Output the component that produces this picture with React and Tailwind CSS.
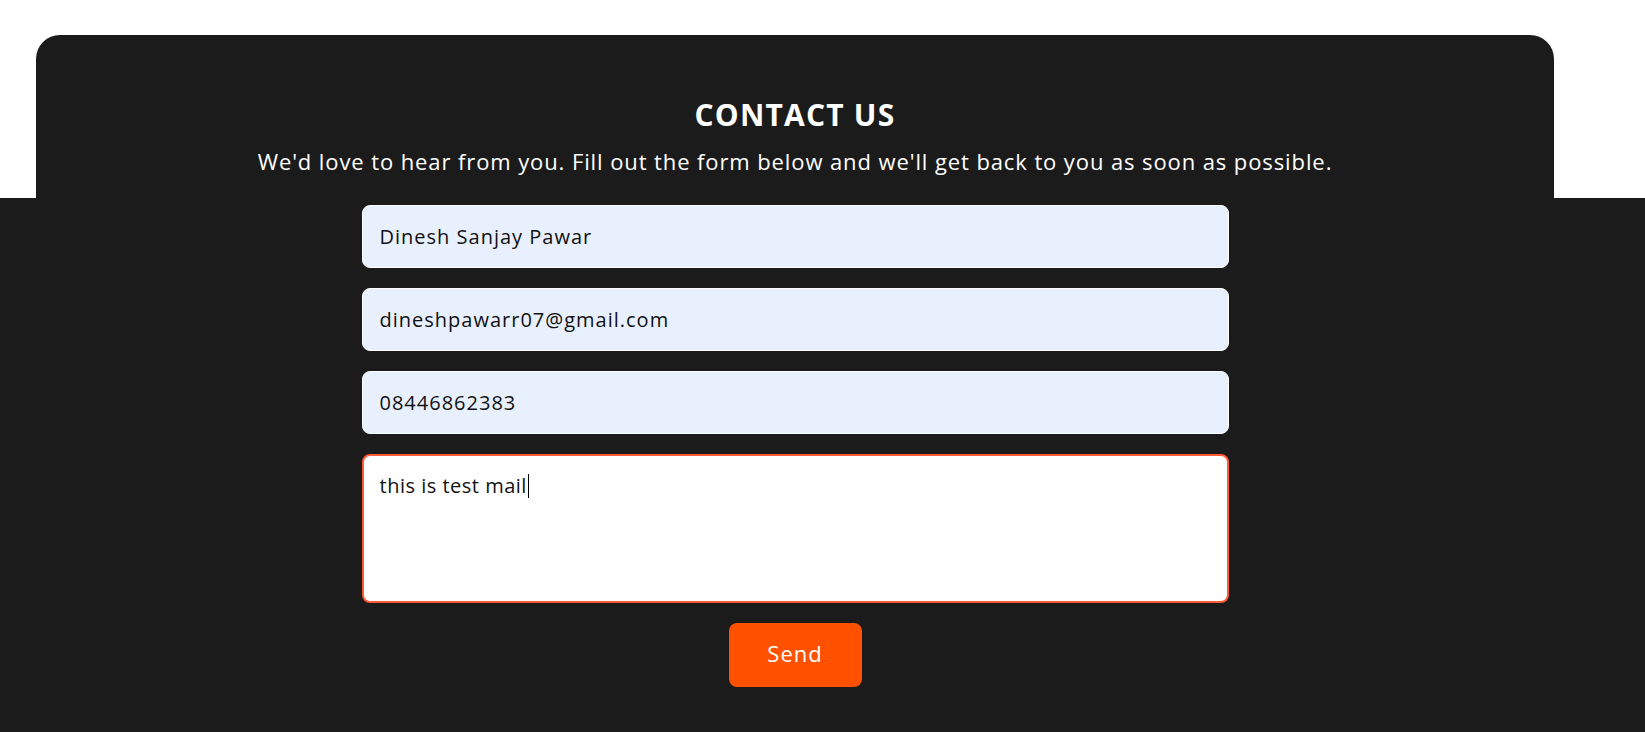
import React from 'react'

const font = { fontFamily: '"Open Sans", "Liberation Sans", sans-serif' }

const fields = [
  { type: 'text', value: 'Dinesh Sanjay Pawar' },
  { type: 'email', value: 'dineshpawarr07@gmail.com' },
  { type: 'tel', value: '08446862383' },
]

const App = () => {
  return (
    <div className="min-h-screen bg-white" style={font}>
      {/* Header card */}
      <div className="pt-[35px]">
        <div className="ml-[36px] w-[1518px] h-[163px] bg-[#1b1b1b] rounded-t-[24px] pt-[62px] text-center text-white">
          <h1 className="text-[30px] leading-[36px] font-bold tracking-[1.2px]">CONTACT US</h1>
          <p className="mt-[14px] text-[22px] leading-[28px] tracking-[0.9px]">
            We'd love to hear from you. Fill out the form below and we'll get back to you as soon as possible.
          </p>
        </div>
      </div>

      {/* Form band */}
      <div className="bg-[#1b1b1b] pb-[46px]">
        <form className="ml-[36px] w-[1518px] pt-[7px] flex flex-col items-center" onSubmit={e => e.preventDefault()}>
          <div className="w-[867px] flex flex-col gap-[20px]">
            {fields.map((f, i) => (
              <input
                key={i}
                type={f.type}
                defaultValue={f.value}
                readOnly
                className="h-[63px] w-full rounded-[8px] border border-white bg-[#e8f0fe] px-[17px] text-[20px] text-[#111] tracking-[1px] outline-none"
                style={font}
              />
            ))}
            <div className="relative">
              <textarea
                defaultValue="this is test mail"
                readOnly
                className="block h-[149px] w-full resize-none rounded-[8px] border-2 border-[#ff5a36] bg-white px-[16px] pt-[16px] text-[20px] leading-[28px] text-[#111] tracking-[0.5px] outline-none"
                style={font}
              />
              {/* caret */}
              <span className="absolute left-[166px] top-[20px] h-[24px] w-px bg-black" />
            </div>
          </div>
          <button
            type="submit"
            className="mt-[20px] h-[64px] w-[133px] rounded-[8px] bg-[#ff5100] pb-[3px] text-[22px] text-white tracking-[1px]"
            style={font}
          >
            Send
          </button>
        </form>
      </div>
    </div>
  )
}

export default App
